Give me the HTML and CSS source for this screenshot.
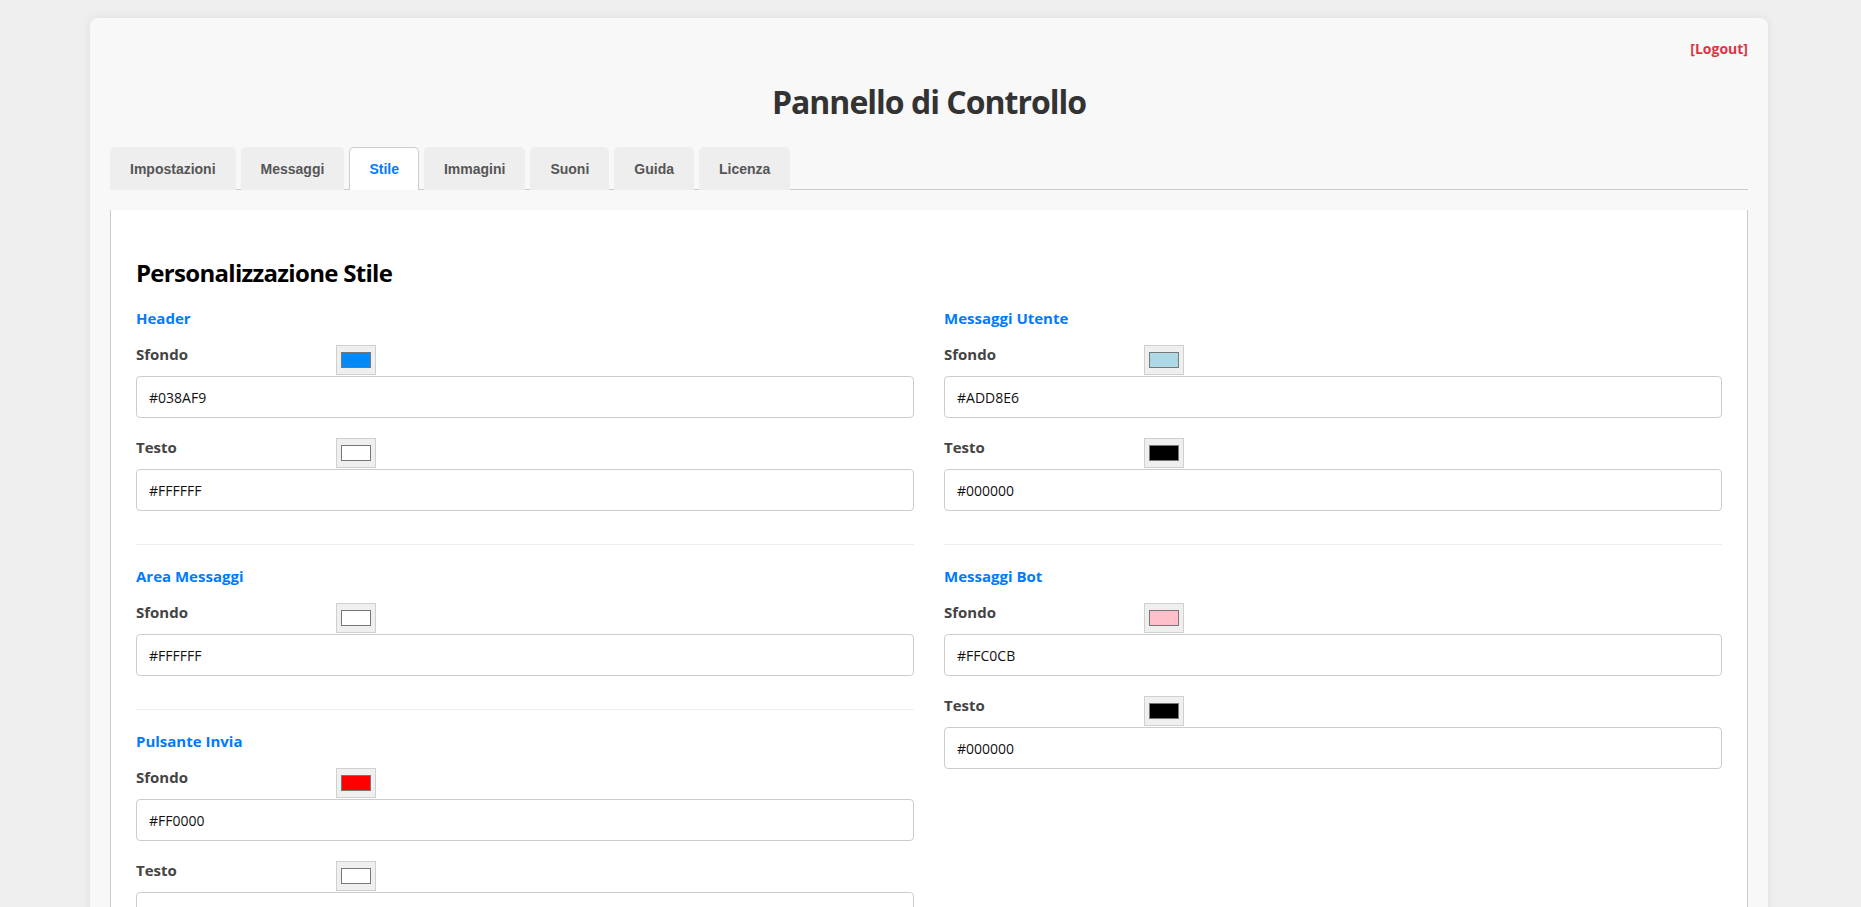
FILE: index.html
```html
<!DOCTYPE html>
<html lang="it">
<head>
<meta charset="utf-8">
<title>Pannello di Controllo</title>
<link rel="stylesheet" href="styles.css">
</head>
<body>
<div class="card">
  <div class="topbar"><a class="logout" href="#">[Logout]</a></div>
  <h1 class="title">Pannello di Controllo</h1>
  <nav class="tabs">
    <button class="tab">Impostazioni</button>
    <button class="tab">Messaggi</button>
    <button class="tab active">Stile</button>
    <button class="tab">Immagini</button>
    <button class="tab">Suoni</button>
    <button class="tab">Guida</button>
    <button class="tab">Licenza</button>
  </nav>
  <section class="panel">
    <h2 class="panel-title">Personalizzazione Stile</h2>
    <div class="columns">
      <div class="col">
        <div class="group">
          <h3 class="group-title">Header</h3>
          <div class="field">
            <div class="field-head"><label class="field-label">Sfondo</label><span class="swatch"><span class="swatch-fill" style="background:#038AF9"></span></span></div>
            <input class="hex" type="text" value="#038AF9">
          </div>
          <div class="field">
            <div class="field-head"><label class="field-label">Testo</label><span class="swatch"><span class="swatch-fill" style="background:#FFFFFF"></span></span></div>
            <input class="hex" type="text" value="#FFFFFF">
          </div>
        </div>
        <div class="group">
          <h3 class="group-title">Area Messaggi</h3>
          <div class="field">
            <div class="field-head"><label class="field-label">Sfondo</label><span class="swatch"><span class="swatch-fill" style="background:#FFFFFF"></span></span></div>
            <input class="hex" type="text" value="#FFFFFF">
          </div>
        </div>
        <div class="group">
          <h3 class="group-title">Pulsante Invia</h3>
          <div class="field">
            <div class="field-head"><label class="field-label">Sfondo</label><span class="swatch"><span class="swatch-fill" style="background:#FF0000"></span></span></div>
            <input class="hex" type="text" value="#FF0000">
          </div>
          <div class="field">
            <div class="field-head"><label class="field-label">Testo</label><span class="swatch"><span class="swatch-fill" style="background:#FFFFFF"></span></span></div>
            <input class="hex" type="text" value="#FFFFFF">
          </div>
        </div>
      </div>
      <div class="col">
        <div class="group">
          <h3 class="group-title">Messaggi Utente</h3>
          <div class="field">
            <div class="field-head"><label class="field-label">Sfondo</label><span class="swatch"><span class="swatch-fill" style="background:#ADD8E6"></span></span></div>
            <input class="hex" type="text" value="#ADD8E6">
          </div>
          <div class="field">
            <div class="field-head"><label class="field-label">Testo</label><span class="swatch"><span class="swatch-fill" style="background:#000000"></span></span></div>
            <input class="hex" type="text" value="#000000">
          </div>
        </div>
        <div class="group">
          <h3 class="group-title">Messaggi Bot</h3>
          <div class="field">
            <div class="field-head"><label class="field-label">Sfondo</label><span class="swatch"><span class="swatch-fill" style="background:#FFC0CB"></span></span></div>
            <input class="hex" type="text" value="#FFC0CB">
          </div>
          <div class="field">
            <div class="field-head"><label class="field-label">Testo</label><span class="swatch"><span class="swatch-fill" style="background:#000000"></span></span></div>
            <input class="hex" type="text" value="#000000">
          </div>
        </div>
      </div>
    </div>
  </section>
</div>
</body>
</html>
```

FILE: styles.css
```css
html {
  scrollbar-width: none;
}
html::-webkit-scrollbar {
  display: none;
}
body {
  margin: 0;
  padding-right: 3px;
  background: #efefef;
  font-family: "Open Sans", "Noto Sans", sans-serif;
  color: #333;
}
.card {
  width: 1678px;
  box-sizing: border-box;
  margin: 18px auto 0;
  padding: 20px 20px 40px;
  background: #f8f8f8;
  border-radius: 8px;
  box-shadow: 0 0 10px rgba(0, 0, 0, 0.08);
}
.topbar {
  display: flex;
  justify-content: flex-end;
  line-height: 22px;
}
.logout {
  color: #dc3545;
  font-size: 14px;
  font-weight: 700;
  text-decoration: none;
}
.title {
  margin: 22px 0 25px;
  font-size: 32px;
  line-height: 40px;
  font-weight: 700;
  letter-spacing: -1px;
  text-align: center;
  color: #333;
}
.tabs {
  display: flex;
  gap: 5px;
  border-bottom: 1px solid #ccc;
}
.tab {
  margin: 0 0 -1px;
  padding: 13px 19px;
  border: 1px solid transparent;
  border-bottom: 0;
  border-radius: 5px 5px 0 0;
  background: #eee;
  font-family: "Liberation Sans", Arial, sans-serif;
  font-size: 14px;
  line-height: 16px;
  font-weight: 700;
  color: #555;
  cursor: pointer;
}
.tab.active {
  background: #fff;
  border-color: #ccc;
  color: #007bff;
}
.panel {
  margin-top: 20px;
  padding: 25px 25px 20px;
  background: #fff;
  border-left: 1px solid #ccc;
  border-right: 1px solid #ccc;
}
.panel-title {
  margin: 22px 0 20px;
  font-size: 24px;
  line-height: 32px;
  font-weight: 700;
  letter-spacing: -0.7px;
  color: #000;
}
.columns {
  display: grid;
  grid-template-columns: 1fr 1fr;
  column-gap: 30px;
  align-items: start;
}
.group {
  padding-bottom: 13px;
  margin-bottom: 22px;
  border-bottom: 1px solid #eee;
}
.group:last-child {
  border-bottom: 0;
  margin-bottom: 0;
}
.group-title {
  margin: -1px 0 17px;
  font-size: 15px;
  line-height: 20px;
  font-weight: 700;
  color: #007bff;
}
.field {
  margin-bottom: 20px;
}
.field-head {
  display: flex;
  align-items: flex-start;
  height: 30px;
}
.field-label {
  width: 200px;
  margin-top: -1px;
  font-size: 15px;
  line-height: 20px;
  font-weight: 700;
  color: #444;
}
.swatch {
  box-sizing: border-box;
  width: 40px;
  height: 30px;
  padding: 6px 4px;
  border: 1px solid #d0d0d0;
  background: #efefef;
}
.swatch-fill {
  display: block;
  height: 100%;
  box-sizing: border-box;
  border: 1px solid #777;
}
.hex {
  display: block;
  box-sizing: border-box;
  width: 100%;
  height: 42px;
  margin-top: 1px;
  padding: 0 12px;
  border: 1px solid #ccc;
  border-radius: 4px;
  background: #fff;
  font-family: "Open Sans", "Noto Sans", sans-serif;
  font-size: 14px;
  color: #111;
}
```
